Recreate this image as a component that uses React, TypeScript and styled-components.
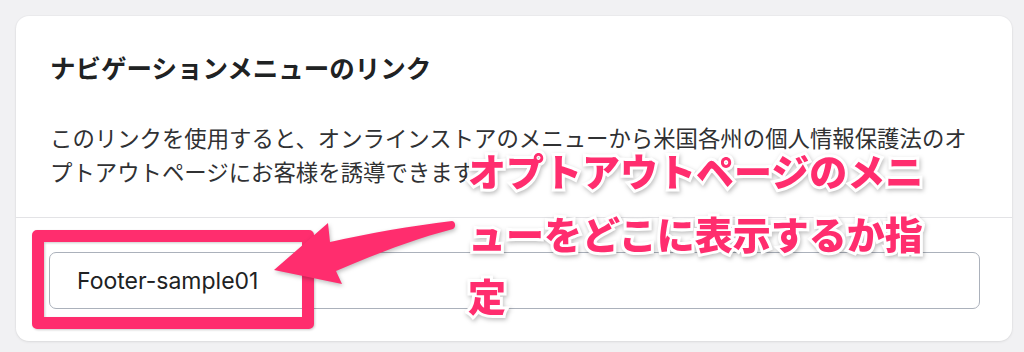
import React from 'react';
import styled, { createGlobalStyle } from 'styled-components';

const GlobalStyle = createGlobalStyle`
  html, body {
    margin: 0;
    padding: 0;
    background: #f1f1f3;
  }
  body {
    font-family: Inter, "Noto Sans CJK JP", "Noto Sans", sans-serif;
  }
`;

const pink = '#ff2d6e';

const Page = styled.div`
  position: relative;
  width: 1024px;
  height: 352px;
  padding: 16px 12px 11px 16px;
  box-sizing: border-box;
  overflow: hidden;
`;

const Card = styled.section`
  background: #fff;
  border-radius: 13px;
  height: 100%;
  box-shadow: 0 1px 3px rgba(0, 0, 0, 0.08), 0 0 0 1px rgba(0, 0, 0, 0.02);
  display: flex;
  flex-direction: column;
`;

const Header = styled.div`
  padding: 32px 34px 29px 34px;
  border-bottom: 1.5px solid #e3e3e6;
`;

const Title = styled.h2`
  margin: 0 0 34px;
  font-family: "Noto Sans CJK JP", sans-serif;
  font-size: 25.5px;
  line-height: 38px;
  font-weight: 700;
  color: #202223;
`;

const Description = styled.p`
  margin: 0;
  font-family: "Noto Sans CJK JP", sans-serif;
  font-size: 22.4px;
  line-height: 34px;
  font-weight: 400;
  color: #303133;
`;

const Body = styled.div`
  padding: 34px 32px 32px 33px;
`;

const Field = styled.div`
  height: 57px;
  box-sizing: border-box;
  border: 1.5px solid #abb1bb;
  border-radius: 7px;
  display: flex;
  align-items: center;
  padding-left: 27px;
  font-family: Inter, "Noto Sans", sans-serif;
  font-size: 23px;
  color: #202223;
`;

const Highlight = styled.div`
  position: absolute;
  left: 32px;
  top: 230px;
  width: 282px;
  height: 99px;
  box-sizing: border-box;
  border: 12px solid ${pink};
  border-radius: 5px;
  filter: drop-shadow(1px 1px 1px rgba(0, 0, 0, 0.2));
`;

const Arrow = styled.svg`
  position: absolute;
  left: 0;
  top: 0;
  filter: drop-shadow(1px 2px 2px rgba(0, 0, 0, 0.25));
`;

const Note = styled.div`
  position: absolute;
  left: 468px;
  top: 139px;
  font-family: "Noto Sans CJK JP", sans-serif;
  font-weight: 900;
  font-size: 38px;
  line-height: 62.5px;
  color: ${pink};
  white-space: nowrap;
  -webkit-text-stroke: 6px #fff;
  paint-order: stroke fill;
  filter: drop-shadow(1px 2px 2px rgba(0, 0, 0, 0.25));
`;

export default function App() {
  return (
    <Page>
      <GlobalStyle />
      <Card>
        <Header>
          <Title>ナビゲーションメニューのリンク</Title>
          <Description>
            このリンクを使用すると、オンラインストアのメニューから米国各州の個人情報保護法のオプトアウトページにお客様を誘導できます。
          </Description>
        </Header>
        <Body>
          <Field>Footer-sample01</Field>
        </Body>
      </Card>
      <Highlight />
      <Arrow width="1024" height="352" viewBox="0 0 1024 352">
        <path
          d="M452 221 C 410 226, 370 233, 330 242 L 328 223 L 274 270 L 342 284 L 336 271 C 376 254, 414 239, 453 229 C 456 227, 456 222, 452 221 Z"
          fill={pink}
        />
      </Arrow>
      <Note>
        オプトアウトページのメニ
        <br />
        ューをどこに表示するか指
        <br />
        定
      </Note>
    </Page>
  );
}
